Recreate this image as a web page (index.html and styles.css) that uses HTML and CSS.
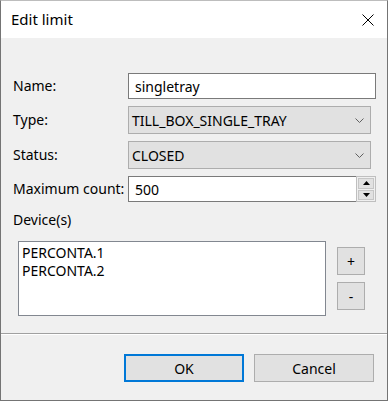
FILE: index.html
```html
<!DOCTYPE html>
<html>
<head>
	<meta charset="UTF-8">
	<title>Edit limit</title>
	<link rel="stylesheet" href="styles.css">
</head>
<body>
	<div class="window">
		<div class="title-bar">
			<span class="title">Edit limit</span>
			<span class="close">
				<svg width="12" height="12" viewBox="0 0 12 12"><path d="M0.5 0.5 L11.5 11.5 M11.5 0.5 L0.5 11.5" stroke="#000" stroke-width="1" fill="none"/></svg>
			</span>
		</div>

		<div class="content">
			<div class="form-grid">
				<label class="label">Name:</label>
				<div class="text-box name-box">singletray</div>

				<label class="label">Type:</label>
				<div class="combo type-combo">
					<span>TILL_BOX_SINGLE_TRAY</span>
					<svg class="chevron" width="9" height="5" viewBox="0 0 9 5"><path d="M0.5 0.5 L4.5 4.5 L8.5 0.5" stroke="#606060" fill="none"/></svg>
				</div>

				<label class="label">Status:</label>
				<div class="combo type-combo">
					<span>CLOSED</span>
					<svg class="chevron" width="9" height="5" viewBox="0 0 9 5"><path d="M0.5 0.5 L4.5 4.5 L8.5 0.5" stroke="#606060" fill="none"/></svg>
				</div>

				<label class="label">Maximum count:</label>
				<div class="spin-row">
					<div class="text-box count-box">500</div>
					<div class="spinner">
						<div class="spin-btn">
							<svg width="7" height="4" viewBox="0 0 7 4"><path d="M3.5 0 L7 4 L0 4 Z" fill="#000"/></svg>
						</div>
						<div class="spin-btn">
							<svg width="7" height="4" viewBox="0 0 7 4"><path d="M0 0 L7 0 L3.5 4 Z" fill="#000"/></svg>
						</div>
					</div>
				</div>
			</div>

			<div class="devices-label">Device(s)</div>

			<div class="devices-row">
				<div class="list-box">
					<div class="list-item">PERCONTA.1</div>
					<div class="list-item">PERCONTA.2</div>
				</div>
				<div class="list-buttons">
					<button class="small-btn">+</button>
					<button class="small-btn">-</button>
				</div>
			</div>
		</div>

		<div class="footer">
			<button class="btn btn-default">OK</button>
			<button class="btn">Cancel</button>
		</div>
	</div>
</body>
</html>
```

FILE: styles.css
```css
body {
	margin: 0;
	padding: 0;
	background-color: #ffffff;
	font-family: "Noto Sans", "Open Sans", sans-serif;
	font-size: 14px;
	color: #000000;
}

.window {
	width: 386px;
	height: 399px;
	border: 1px solid #747474;
	border-top-color: #bdbdbd;
	background-color: #f0f0f0;
	display: flex;
	flex-direction: column;
}

.title-bar {
	height: 37px;
	flex-shrink: 0;
	background-color: #ffffff;
	display: flex;
	align-items: center;
	justify-content: space-between;
	padding: 0 13px 0 10px;
}

.title {
	font-size: 15px;
	margin-top: -2px;
}

.close {
	display: flex;
	margin-top: 1px;
}

.content {
	height: 296px;
	flex-shrink: 0;
	padding: 35px 12px 0 12px;
	box-sizing: border-box;
	border-bottom: 1px solid #a0a0a0;
}

.form-grid {
	display: grid;
	grid-template-columns: 115px 248px;
	row-gap: 7px;
	align-items: center;
}

.label {
	line-height: 16px;
}

.text-box {
	height: 26px;
	box-sizing: border-box;
	border: 1px solid #7a7a7a;
	background-color: #ffffff;
	padding: 0 6px;
	display: flex;
	align-items: center;
}

.combo {
	width: 243px;
	height: 28px;
	box-sizing: border-box;
	border: 1px solid #adadad;
	background-color: #e1e1e1;
	padding: 0 5px 0 3px;
	display: flex;
	align-items: center;
	justify-content: space-between;
}

.chevron {
	margin-right: 1px;
}

.spin-row {
	display: flex;
	height: 26px;
}

.count-box {
	flex: 1;
	border-right: none;
}

.spinner {
	width: 20px;
	box-sizing: border-box;
	border: 1px solid #bfbfbf;
	background-color: #f0f0f0;
	display: flex;
	flex-direction: column;
	padding: 1px;
	gap: 1px;
}

.spin-btn {
	flex: 1;
	background-color: #e1e1e1;
	border: 1px solid #c6c6c6;
	display: flex;
	align-items: center;
	justify-content: center;
}

.devices-label {
	margin-top: 10px;
	line-height: 16px;
}

.devices-row {
	display: flex;
	margin-top: 13px;
	padding-left: 5px;
}

.list-box {
	width: 308px;
	height: 75px;
	box-sizing: border-box;
	border: 1px solid #828790;
	background-color: #ffffff;
	padding: 2px 3px;
}

.list-item {
	line-height: 18px;
}

.list-buttons {
	display: flex;
	flex-direction: column;
	gap: 7px;
	margin-left: 11px;
	margin-top: 6px;
}

.small-btn {
	width: 28px;
	height: 28px;
	border: 1px solid #adadad;
	background-color: #e1e1e1;
	font-family: "Noto Sans", sans-serif;
	font-size: 14px;
	padding: 0;
}

.footer {
	flex: 1;
	border-top: 1px solid #ffffff;
	display: flex;
	justify-content: flex-end;
	gap: 10px;
	padding: 19px 13px 0 0;
}

.btn {
	width: 120px;
	height: 28px;
	border: 1px solid #adadad;
	background-color: #e1e1e1;
	font-family: "Noto Sans", sans-serif;
	font-size: 14px;
	padding: 0;
}

.btn-default {
	border: 2px solid #0078d7;
}
```
